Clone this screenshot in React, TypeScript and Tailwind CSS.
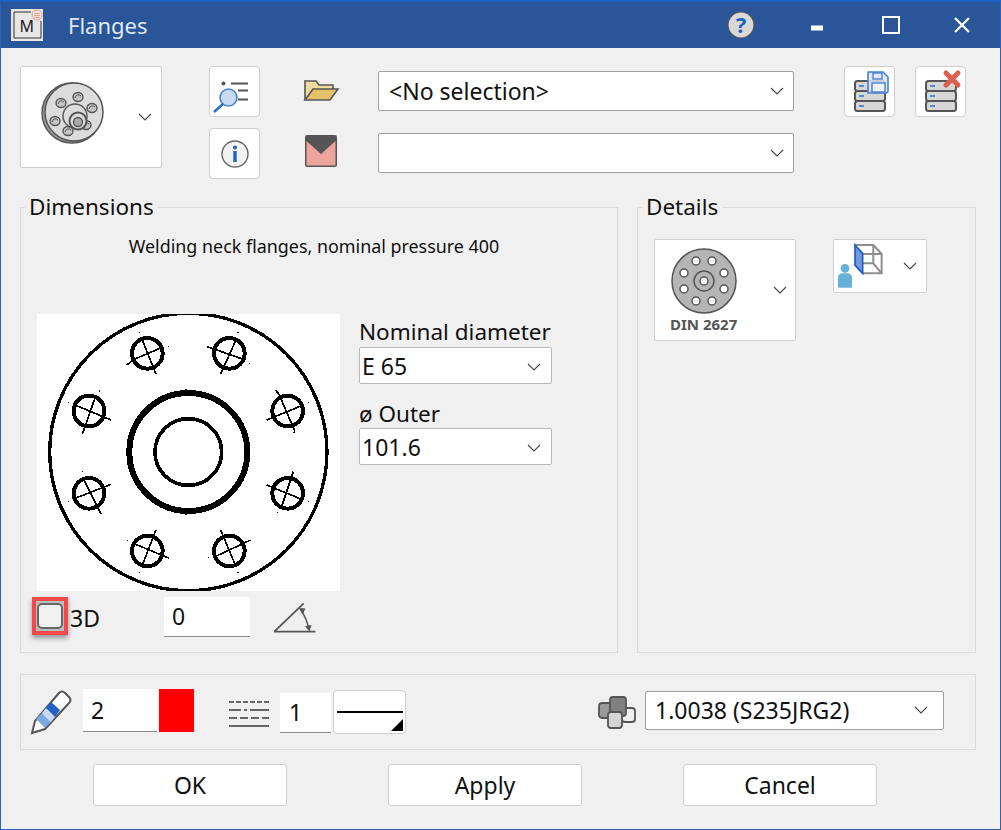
import React from "react";

const Chevron = ({ className = "" }: { className?: string }) => (
  <svg width="14" height="8" viewBox="0 0 14 8" className={className}>
    <path d="M1 1l6 6 6-6" fill="none" stroke="#444" strokeWidth="1.1" />
  </svg>
);

const Select = ({ value, className = "" }: { value: string; className?: string }) => (
  <div className={`flex items-center justify-between bg-white border border-[#a0a0a0] rounded-[2px] ${className}`}>
    <span className="whitespace-nowrap">{value}</span>
    <Chevron />
  </div>
);

const holes: [number, number, number[][]][] = [
  [352, 130, [[335, 85, 378, 192], [290, 165, 312, 148, 390, 115]]],
  [598, 130, [[572, 192, 620, 85], [532, 110, 640, 148]]],
  [773, 303, [[737, 240, 748, 255, 795, 365], [710, 330, 820, 285]]],
  [773, 550, [[790, 485, 755, 590], [710, 525, 820, 570]]],
  [598, 723, [[572, 660, 618, 770], [555, 740, 662, 690]]],
  [352, 723, [[378, 660, 335, 770], [310, 700, 418, 745]]],
  [177, 550, [[160, 505, 213, 612], [135, 565, 243, 523]]],
  [177, 303, [[158, 370, 198, 255], [135, 285, 243, 330]]],
];

const dots = [
  [328, 67], [416, 110], [624, 67], [658, 160], [535, 110], [208, 243], [115, 278], [158, 370], [836, 278], [792, 368],
  [158, 485], [115, 575], [742, 608], [836, 575], [292, 692], [328, 787], [624, 787], [535, 743], [658, 692], [468, 612], [468, 240],
];

const Drawing = () => (
  <svg width="303" height="277" viewBox="21 12 909 831" className="bg-white block shrink-0" shapeRendering="crispEdges">
    <g fill="none" stroke="#000">
      <circle cx="475" cy="426" r="416" strokeWidth="10" />
      <circle cx="475" cy="426" r="177" strokeWidth="18" />
      <circle cx="475" cy="426" r="100" strokeWidth="11" />
      {holes.map(([x, y, ls], i) => (
        <g key={i}>
          <circle cx={x} cy={y} r="46" strokeWidth="12" />
          {ls.map((l, j) => (
            <polyline key={j} points={l.join(" ")} strokeWidth="5" />
          ))}
        </g>
      ))}
    </g>
    {dots.map(([x, y], i) => (
      <rect key={i} x={x - 2} y={y - 2} width="4" height="4" fill="#000" />
    ))}
  </svg>
);

const FlangeIcon = () => (
  <svg width="64" height="62" viewBox="0 0 64 62" className="mb-[8px]">
    <g stroke="#555" fill="#dcdcdc">
      <ellipse cx="31" cy="31" rx="30" ry="30" strokeWidth="1.5" fill="#9a9a9a" />
      <ellipse cx="33" cy="30" rx="29" ry="29" strokeWidth="1.5" />
      {[[20, 21], [37, 15], [51, 26], [14, 39], [27, 49], [45, 43]].map(([x, y], i) => (
        <g key={i}>
          <ellipse cx={x} cy={y} rx="5" ry="4.5" strokeWidth="1.4" fill="#c4c4c4" />
          <path d={`M${x - 3} ${y + 1}a3.500 3.500 0 0 1 6 -2`} fill="none" strokeWidth="1" />
        </g>
      ))}
      <circle cx="34" cy="34" r="12" strokeWidth="1.4" />
      <circle cx="37" cy="39" r="8.500" strokeWidth="2" />
      <circle cx="37" cy="40" r="4.500" strokeWidth="1.4" fill="#aaa" />
    </g>
  </svg>
);

const CardButton = ({ children }: { children: React.ReactNode }) => (
  <button className="w-[51px] h-[51px] flex items-center justify-center bg-white border border-[#cfcfcf] rounded-[4px]">
    {children}
  </button>
);

const Stack = () => (
  <g fill="#d6d6d6" stroke="#555" strokeWidth="2">
    <rect x="10" y="15" width="30" height="10" rx="2.5" />
    <rect x="10" y="25" width="30" height="10" rx="2.5" />
    <rect x="10" y="35" width="30" height="10" rx="2.5" />
    <path d="M14 20h5M14 30h5M14 40h5" stroke="#2f6fc9" strokeWidth="1.4" />
  </g>
);

const PushButton = ({ label }: { label: string }) => (
  <button className="w-[194px] h-[42px] bg-white border border-[#cfcfcf] rounded-[3px] flex items-center justify-center">{label}</button>
);

const SmallInput = ({ value, className = "" }: { value: string; className?: string }) => (
  <div className={`bg-white border-b border-[#8a8a8a] flex items-center ${className}`}>{value}</div>
);

export default function App() {
  return (
    <div
      className="w-[1001px] h-[830px] bg-[#f0f0f0] border-x border-b border-[#2b62b5] border-t-2 border-t-[#1c64c4] flex flex-col overflow-hidden text-[23px] text-[#111]"
      style={{ fontFamily: '"Noto Sans", sans-serif' }}
    >
      {/* Title bar */}
      <div className="h-[46px] shrink-0 bg-[#2a5599] flex items-center text-white pl-[10px]">
        <div className="w-[32px] h-[32px] bg-[#e6e6e6] flex items-center justify-center shrink-0">
          <svg width="32" height="32" viewBox="0 0 32 32">
            <path d="M20 3H3v26h27V12" fill="none" stroke="#333" strokeWidth="1" />
            <text x="8.500" y="22.500" fontSize="16" fill="#222" fontFamily="Noto Sans">M</text>
            <circle cx="26" cy="6" r="5" fill="#f6e4e0" stroke="#e58f80" strokeWidth="0.8" />
            <path d="M23 4.500h6M23 6.500h6M23 8.500h6" stroke="#e58f80" strokeWidth="0.8" />
          </svg>
        </div>
        <span className="ml-[25px] text-[22px] text-[#dfe8f5] mt-[1px]">Flanges</span>
        <div className="ml-auto flex items-center">
          <svg width="30" height="36" viewBox="0 -4 30 36" className="mr-[55px]">
            <circle cx="15" cy="14" r="13" fill="#d8d8d8" stroke="#555" strokeWidth="1.2" />
            <text x="15" y="22" textAnchor="middle" fontSize="22" fontWeight="700" fill="#1f62c4" fontFamily="Noto Sans">?</text>
          </svg>
          <svg width="12" height="6" className="mr-[59px] mt-[6px]"><rect width="12" height="5" y="0.5" fill="#fff" /></svg>
          <svg width="18" height="18" className="mr-[54px]"><rect x="1" y="1" width="16" height="16" fill="none" stroke="#fff" strokeWidth="2" /></svg>
          <svg width="16" height="16" className="mr-[30px]"><path d="M1 1l14 14M15 1L1 15" stroke="#fff" strokeWidth="2.2" /></svg>
        </div>
      </div>

      <div className="flex-1 flex flex-col px-[19px]">
        {/* Toolbar */}
        <div className="flex mt-[18px] h-[113px]">
          <div className="w-[142px] h-[102px] bg-white border border-[#cfcfcf] rounded-[2px] flex items-center pl-[20px] pr-[9px] justify-between">
            <FlangeIcon />
            <Chevron />
          </div>
          <div className="ml-[47px] flex flex-col gap-[11px]">
            <CardButton>
              <svg width="48" height="48" viewBox="0 0 48 48">
                <circle cx="12.500" cy="15.500" r="2" fill="#555" />
                <path d="M20 15.500h17M27 22.500h10M27 31.500h10" stroke="#555" strokeWidth="2" />
                <circle cx="17.500" cy="29.500" r="8.500" fill="#c9dbf3" stroke="#4a80d0" strokeWidth="1.600" />
                <path d="M12 36l-9 8" stroke="#2a6fd0" strokeWidth="2.400" />
              </svg>
            </CardButton>
            <CardButton>
              <svg width="30" height="30" viewBox="0 0 30 30">
                <circle cx="15" cy="15" r="13" fill="#f2f2f2" stroke="#666" strokeWidth="1.4" />
                <circle cx="15" cy="8.500" r="2" fill="#1f62c4" />
                <path d="M15 12v11" stroke="#1f62c4" strokeWidth="3.400" />
              </svg>
            </CardButton>
          </div>
          <div className="w-[37px] ml-[43px] flex flex-col">
            <svg width="37" height="24" viewBox="0 0 37 24" className="mt-[12px]">
              <path d="M2 22V3h11l3 4h14v5" fill="#f1dca0" stroke="#555" strokeWidth="1.600" />
              <path d="M2 22l8-11h25l-8 11z" fill="#e3c268" stroke="#555" strokeWidth="1.600" />
            </svg>
            <svg width="32" height="32" viewBox="0 0 32 32" className="mt-[33px] ml-[2px]">
              <rect width="32" height="32" rx="2" fill="#555" />
              <path d="M1.500 6L16 19 30.500 6v24.500h-29z" fill="#eda49a" />
            </svg>
          </div>
          <div className="ml-[38px] w-[416px] flex flex-col">
            <Select value="<No selection>" className="h-[40px] mt-[5px] pl-[10px] pr-[9px]" />
            <Select value="" className="h-[40px] mt-[22px] pl-[10px] pr-[9px]" />
          </div>
          <div className="ml-[50px] flex gap-[20px]">
            <CardButton>
              <svg width="48" height="48" viewBox="0 0 48 48">
                <g transform="translate(-1 -2)"><Stack /></g>
                <path d="M22 4h15l5 5v14a2 2 0 0 1-2 2H22z" fill="#d9e5f6" fillOpacity="0.85" stroke="#4a80d0" strokeWidth="1.600" />
                <rect x="27" y="5" width="9" height="6" fill="none" stroke="#4a80d0" strokeWidth="1.400" />
                <rect x="26" y="15" width="13" height="9" fill="#eef3fb" stroke="#4a80d0" strokeWidth="1.400" />
              </svg>
            </CardButton>
            <CardButton>
              <svg width="48" height="48" viewBox="0 0 48 48">
                <g transform="translate(-1 -2)"><Stack /></g>
                <path d="M29 5l12 12M41 5L29 17" stroke="#d9604f" strokeWidth="5" strokeLinecap="round" />
              </svg>
            </CardButton>
          </div>
        </div>

        {/* Group boxes */}
        <div className="flex gap-[19px] mt-[14px] h-[460px] items-stretch">
          <fieldset className="w-[598px] border border-[#dcdcdc] pl-[16px] pr-[16px] flex flex-col">
            <legend className="-ml-[12px] px-[4px] text-[22.500px] leading-[28px]">Dimensions</legend>
            <div className="text-[17.900px] text-center pr-[10px] leading-[24px] mt-[13px]">Welding neck flanges, nominal pressure 400</div>
            <div className="flex mt-[56px]">
              <Drawing />
              <div className="ml-[19px] w-[193px]">
                <div className="leading-[30px] mt-[3px] text-[22.500px] whitespace-nowrap">Nominal diameter</div>
                <Select value="E 65" className="h-[37px] pl-[2px] pr-[10px] pt-[2px] border-[#b8b8b8]" />
                <div className="leading-[28px] mt-[16px] text-[22.500px]">ø Outer</div>
                <Select value="101.6" className="h-[37px] pl-[2px] pr-[10px] pt-[2px] border-[#b8b8b8]" />
              </div>
            </div>
            <div className="flex items-center mt-[6px]">
              <div className="relative -ml-[5px] w-[36px] h-[38px] border-[4px] border-[#f24a4a] bg-[#bdbdbd] shadow-[0_3px_5px_rgba(0,0,0,0.4)] flex items-center justify-center shrink-0 mb-[2px]">
                <div className="w-[26px] h-[26px] rounded-[5px] border-2 border-[#666] bg-[#f0f0f0]"></div>
              </div>
              <span className="ml-[2px] mt-[2px]">3D</span>
              <SmallInput value="0" className="w-[86px] h-[40px] ml-[64px] pl-[8px]" />
              <svg width="44" height="36" viewBox="0 0 44 36" className="ml-[23px] mt-[2px]">
                <path d="M1.300 31.700L30.700 3.300M1 31.700h41.500" stroke="#555" strokeWidth="1.800" fill="none" />
                <path d="M28 10q6 9 8 20" stroke="#555" strokeWidth="1.400" fill="none" />
                <path d="M26 8l6.500 0.500-3 6zM36.500 31.500l-4.500-5.500 6.500-1z" fill="#555" />
              </svg>
            </div>
          </fieldset>
          <fieldset className="w-[339px] border border-[#dcdcdc] pl-[16px]">
            <legend className="-ml-[12px] px-[4px] text-[22.500px] leading-[28px]">Details</legend>
            <div className="flex items-start gap-[37px] mt-[18px]">
              <div className="w-[142px] h-[102px] bg-white border border-[#cfcfcf] rounded-[2px] flex items-center pr-[8px] shrink-0 relative">
                <div className="flex flex-col items-center pl-[15px]">
                  <svg width="66" height="66" viewBox="0 0 66 66">
                    <circle cx="33" cy="33" r="32" fill="#b5b5b5" stroke="#555" strokeWidth="1.500" />
                    {[[25, 13], [41, 13], [13, 25], [53, 25], [13, 41], [53, 41], [25, 53], [41, 53]].map(([x, y], i) => (
                      <circle key={i} cx={x} cy={y} r="4" fill="#fff" stroke="#555" strokeWidth="1.500" />
                    ))}
                    <circle cx="33" cy="33" r="10" fill="none" stroke="#555" strokeWidth="1.500" />
                    <circle cx="33" cy="33" r="4" fill="#fff" stroke="#555" strokeWidth="1.500" />
                  </svg>
                  <span className="text-[15px] font-bold text-[#555] leading-[18px] mt-[1px] whitespace-nowrap">DIN 2627</span>
                </div>
                <Chevron className="ml-auto" />
              </div>
              <div className="w-[94px] h-[54px] bg-white border border-[#cfcfcf] rounded-[2px] flex items-center pr-[9px] relative">
                <svg width="50" height="50" viewBox="0 0 50 50" className="shrink-0">
                  <g transform="translate(-194 -11) scale(0.3333)">
                    <path d="M645 45H700L725 72V130H668L645 105M668 72H725M668 100H700L725 130M700 45V100" fill="none" stroke="#8e8e8e" strokeWidth="6" />
                    <path d="M645 45L668 70V130L645 105Z" fill="#6f9ae0" stroke="#1f5cc0" strokeWidth="5" />
                    <circle cx="615" cy="115" r="13" fill="#66b2d6" />
                    <path d="M594 173V145Q594 130 609 130H621Q636 130 636 145V173Z" fill="#66b2d6" />
                  </g>
                </svg>
                <Chevron className="ml-auto" />
              </div>
            </div>
          </fieldset>
        </div>

        {/* Properties */}
        <div className="mt-[21px] h-[76px] w-[956px] border border-[#dcdcdc] flex items-center pl-[9px]">
          <svg width="42" height="46" viewBox="0 0 42 46" className="shrink-0">
            <path d="M2 44l3-12L29 4q3-3 6 0l4 4q3 3 0 6L15 40z" fill="#fff" stroke="#555" strokeWidth="2" />
            <path d="M12 24l9 9-6 6-9-9z" fill="#7ea6e0" />
            <path d="M16 19l9 9-4 5-9-9z" fill="#c8daf3" />
            <path d="M21 13l9 8-5 7-9-9z" fill="#1f62c4" />
          </svg>
          <SmallInput value="2" className="w-[74px] h-[43px] ml-[11px] pl-[8px] mb-[3px]" />
          <div className="w-[35px] h-[43px] bg-[#ff0000] ml-[2px] mb-[3px]"></div>
          <svg width="42" height="28" viewBox="0 0 42 28" className="ml-[34px] shrink-0 mt-[4px]">
            <path d="M1 2h40" stroke="#666" strokeWidth="2" strokeDasharray="5 2" />
            <path d="M1 10h12M16 10h3M22 10h19" stroke="#666" strokeWidth="2" />
            <path d="M1 18h40" stroke="#666" strokeWidth="2" strokeDasharray="8 3" />
            <path d="M1 26h40" stroke="#666" strokeWidth="2" />
          </svg>
          <SmallInput value="1" className="w-[51px] h-[40px] ml-[10px] pl-[9px] mt-[1px]" />
          <div className="relative w-[73px] h-[44px] ml-[2px] bg-white border border-[#cfcfcf] rounded-[4px] flex items-center shrink-0">
            <div className="w-[66px] h-[2px] bg-black mx-auto"></div>
            <svg width="12" height="12" className="absolute right-[2px] bottom-[2px]"><path d="M12 0v12H0z" fill="#000" /></svg>
          </div>
          <svg width="40" height="36" viewBox="0 0 40 36" className="ml-[192px] shrink-0">
            <rect x="1" y="9" width="18" height="15" rx="3" fill="#9a9a9a" stroke="#555" strokeWidth="1.800" />
            <rect x="24" y="14" width="13" height="14" rx="3" fill="#f0f0f0" stroke="#555" strokeWidth="1.800" />
            <rect x="12" y="3" width="16" height="19" rx="3" fill="#808080" stroke="#555" strokeWidth="1.800" />
            <rect x="10" y="18" width="14" height="16" rx="3" fill="#d4d4d4" stroke="#555" strokeWidth="1.800" />
          </svg>
          <Select value="1.0038 (S235JRG2)" className="w-[299px] h-[39px] ml-[7px] pl-[9px] pr-[15px] mb-[4px]" />
        </div>

        {/* Actions */}
        <div className="flex mt-[14px] pl-[73px] gap-[101px]">
          <PushButton label="OK" />
          <PushButton label="Apply" />
          <PushButton label="Cancel" />
        </div>
      </div>
    </div>
  );
}
